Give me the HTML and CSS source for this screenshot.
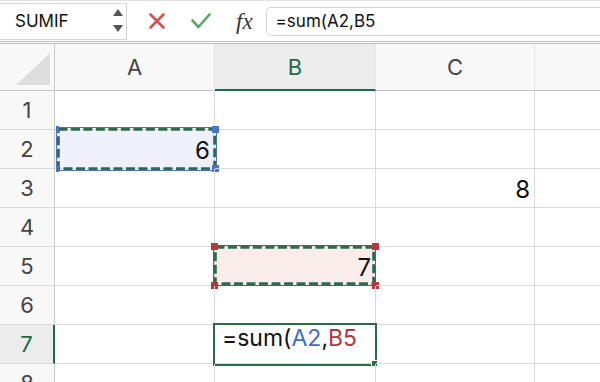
FILE: index.html
```html
<!DOCTYPE html>
<html>
<head>
<meta charset="utf-8">
<title>Sheet</title>
<link rel="stylesheet" href="styles.css">
</head>
<body>
<div class="fbar">
  <div class="namebox">
    <span>SUMIF</span>
    <svg class="spin" width="10" height="24" viewBox="0 0 10 24"><polygon points="5,0 10,7 0,7"/><polygon points="0,16 10,16 5,23"/></svg>
  </div>
  <div class="tools">
    <svg width="18" height="18" viewBox="0 0 18 18"><path d="M2.5 2.5 L15.5 15.5 M15.5 2.5 L2.5 15.5" stroke="#d64e4e" stroke-width="2.6" stroke-linecap="round" fill="none"/></svg>
    <svg width="20" height="20" viewBox="0 0 20 20"><path d="M1.5 9.5 L7.5 16 L18.5 3.5" stroke="#5aa85c" stroke-width="2.6" stroke-linecap="round" stroke-linejoin="round" fill="none"/></svg>
    <span class="fx">fx</span>
  </div>
  <div class="finput">=sum(A2,B5</div>
</div>

<div class="sheet">
  <div class="corner"><svg width="54" height="46" viewBox="0 0 54 46"><polygon points="16,41 50,41 50,9" fill="#dedede"/></svg></div>
  <div class="ch">A</div>
  <div class="ch sel">B</div>
  <div class="ch">C</div>
  <div class="ch last"></div>

  <div class="rh">1</div><div class="c"></div><div class="c"></div><div class="c"></div><div class="c d"></div>

  <div class="rh">2</div>
  <div class="c a2">6
    <svg class="ov ov-a2" width="161" height="44" viewBox="0 0 161 44">
      <rect x="0.5" y="0.5" width="160" height="43" fill="none" stroke="#4a72c6" stroke-width="1"/>
      <rect x="2.4" y="2.4" width="156.2" height="39.2" fill="none" stroke="#2e6b48" stroke-width="2.8" stroke-dasharray="9 3.5"/>
      <rect x="0" y="-1" width="3" height="7" fill="#4a72c6"/>
      <rect x="0" y="38" width="3" height="7" fill="#4a72c6"/>
      <rect x="156" y="-1" width="7" height="7" fill="#4a72c6"/>
      <rect x="156" y="38" width="7" height="7" fill="#4a72c6"/>
    </svg>
  </div>
  <div class="c"></div><div class="c"></div><div class="c d"></div>

  <div class="rh">3</div><div class="c"></div><div class="c"></div><div class="c">8</div><div class="c d"></div>

  <div class="rh">4</div><div class="c"></div><div class="c"></div><div class="c"></div><div class="c d"></div>

  <div class="rh">5</div>
  <div class="c"></div>
  <div class="c b5">7
    <svg class="ov ov-b5" width="163" height="41" viewBox="0 0 163 41">
      <rect x="0.5" y="0.5" width="162" height="40" fill="none" stroke="#b5393c" stroke-width="1"/>
      <rect x="2.4" y="2.4" width="158.2" height="36.2" fill="none" stroke="#2e6b48" stroke-width="2.8" stroke-dasharray="9 3.5"/>
      <rect x="-2" y="-2" width="7" height="7" fill="#b5393c"/>
      <rect x="159" y="-2" width="7" height="7" fill="#b5393c"/>
      <rect x="-2" y="37" width="7" height="7" fill="#b5393c"/>
      <rect x="159" y="37" width="7" height="7" fill="#b5393c"/>
    </svg>
  </div>
  <div class="c"></div><div class="c d"></div>

  <div class="rh">6</div><div class="c"></div><div class="c"></div><div class="c"></div><div class="c d"></div>

  <div class="rh sel">7</div>
  <div class="c"></div>
  <div class="c edit">=sum(<span class="ref-a">A2</span>,<span class="ref-b">B5</span>
    <svg class="ov ov-b7" width="164" height="43" viewBox="0 0 164 43">
      <rect x="1" y="1" width="162" height="41" fill="none" stroke="#2b6c44" stroke-width="2"/>
      <rect x="158.5" y="37.5" width="6" height="6" fill="#2b6c44" stroke="#ffffff" stroke-width="1"/>
    </svg>
  </div>
  <div class="c"></div><div class="c d"></div>

  <div class="rh">8</div><div class="c"></div><div class="c"></div><div class="c"></div><div class="c d"></div>
</div>
</body>
</html>
```

FILE: styles.css
```css
* { box-sizing: border-box; }
html, body { margin: 0; padding: 0; background: #ffffff; }
body {
  width: 600px;
  height: 382px;
  overflow: hidden;
  font-family: Inter, "Liberation Sans", sans-serif;
  color: #111111;
}

/* formula bar */
.fbar {
  display: flex;
  align-items: center;
  height: 44px;
  border-top: 1px solid #e2e2e2;
  border-bottom: 3px double #c2c2c2;
  background: #ffffff;
}
.namebox {
  display: flex;
  align-items: center;
  justify-content: space-between;
  width: 127px;
  height: 37px;
  border: 1px solid #d6d6d6;
  border-left: none;
  padding: 0 3px 0 15px;
  font-size: 17px;
  color: #111111;
}
.spin { fill: #555555; }
.tools {
  display: flex;
  align-items: center;
  gap: 25px;
  padding: 0 13px 0 21px;
  height: 100%;
}
.fx {
  font-family: "Liberation Serif", serif;
  font-style: italic;
  font-size: 23px;
  line-height: 1;
  color: #333333;
}
.finput {
  flex: 1;
  height: 29px;
  display: flex;
  align-items: center;
  padding-left: 9px;
  border: 1px solid #d6d6d6;
  border-right: none;
  border-radius: 5px 0 0 5px;
  font-size: 17px;
  color: #111111;
}

/* grid */
.sheet {
  display: grid;
  grid-template-columns: 55px 160px 161px 159px 1fr;
  grid-template-rows: 47px repeat(8, 39px);
}
.corner {
  background: #f8f8f8;
  border-right: 1px solid #c9c9c9;
  border-bottom: 1px solid #c4c4c4;
}
.corner svg { display: block; }
.ch {
  display: flex;
  align-items: center;
  justify-content: center;
  background: #f8f8f8;
  border-right: 1px solid #e4e4e4;
  border-bottom: 1px solid #c4c4c4;
  font-size: 22px;
  color: #444444;
}
.ch.sel {
  background: #ececec;
  color: #1e6b41;
  border-bottom: 2px solid #1e6b41;
}
.ch.last { border-right: none; }
.rh {
  display: flex;
  align-items: center;
  justify-content: center;
  background: #f8f8f8;
  border-right: 1px solid #c9c9c9;
  border-bottom: 1px solid #d8d8d8;
  font-size: 22px;
  color: #444444;
}
.rh.sel {
  background: #ececec;
  color: #1e6b41;
  border-right: 2px solid #1e6b41;
}
.c {
  position: relative;
  display: flex;
  align-items: flex-end;
  justify-content: flex-end;
  padding: 0 4px 5px 0;
  border-right: 1px solid #dadada;
  border-bottom: 1px solid #dadada;
  font-size: 24px;
  line-height: 1;
  color: #111111;
}
.c.d { border-right: none; }
.c.a2 { background: #eef1fa; }
.c.b5 { background: #f9ecea; }
.c.edit {
  align-items: flex-start;
  justify-content: flex-start;
  padding: 2px 0 0 7px;
  font-size: 23px;
  white-space: pre;
}
.ref-a { color: #3b6cc6; }
.ref-b { color: #b3363a; }

.ov {
  position: absolute;
  overflow: visible;
  pointer-events: none;
}
.ov-a2 { left: 1px; top: -3px; }
.ov-b5 { left: -2px; top: -2px; }
.ov-b7 { left: -2px; top: -2px; }
```
